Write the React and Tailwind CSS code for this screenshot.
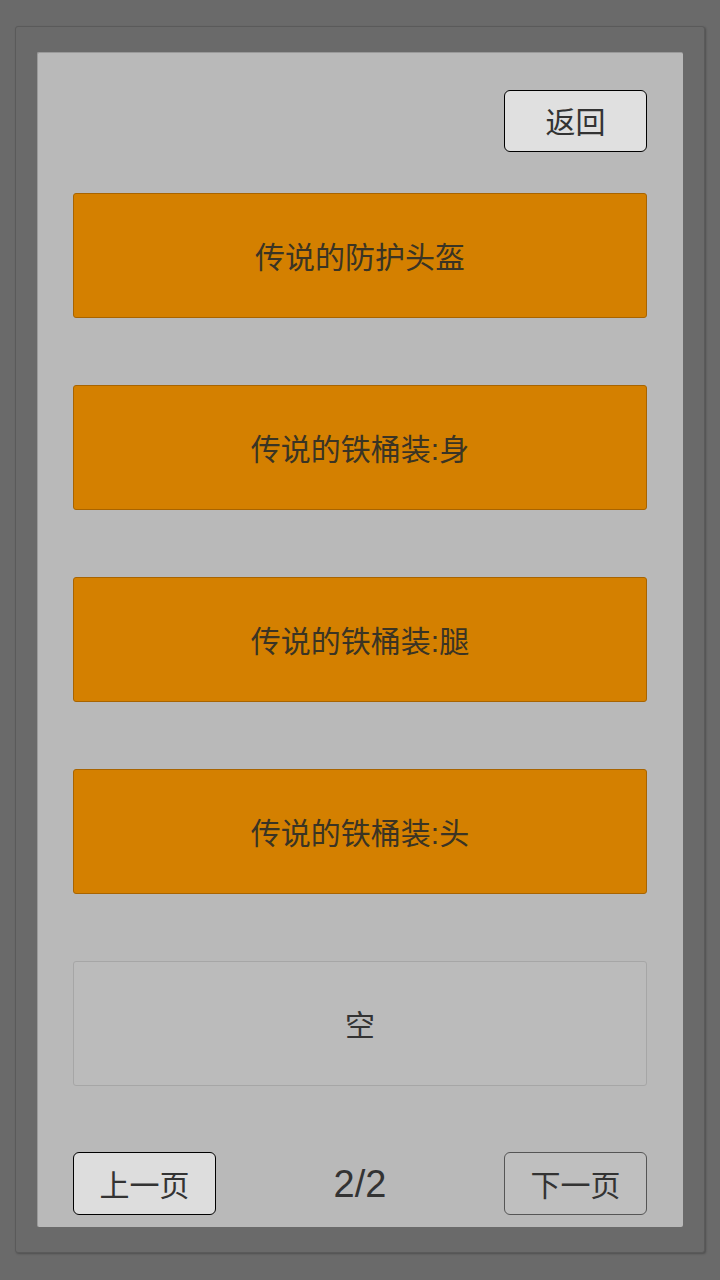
const items = ["传说的防护头盔", "传说的铁桶装:身", "传说的铁桶装:腿", "传说的铁桶装:头"];

const font = { fontFamily: '"Liberation Sans", "Noto Sans CJK SC", sans-serif' };

function ItemButton({ label }) {
  return (
    <button className="h-[125px] w-full rounded-[3px] border border-[#a86400] bg-[#d48000] pt-[3px] text-[30px] text-[#3a3424]">
      {label}
    </button>
  );
}

export default function App() {
  return (
    <div className="flex h-[1280px] w-[720px] bg-[#6a6a6a] pb-[27px] pl-[15px] pr-[15px] pt-[26px]" style={font}>
      {/* OUTER PANEL */}
      <div className="flex flex-1 rounded-[3px] border border-[#5a5a5a] bg-[#6a6a6a] px-[21px] py-[25px] shadow-[1px_1px_2px_rgba(0,0,0,0.25)]">
        {/* INNER PANEL */}
        <div className="flex flex-1 flex-col rounded-[2px] border-l border-t border-[#9a9a9a] bg-[#b9b9b9] pb-[12px] pl-[35px] pr-[36px] pt-[37px]">
          <div className="flex justify-end">
            <button className="h-[62px] w-[143px] rounded-[6px] border border-black bg-[#e0e0e0] pt-[3px] text-[30px] text-[#333]">
              返回
            </button>
          </div>

          <div className="mt-[41px] flex flex-col gap-[67px]">
            {items.map((label) => (
              <ItemButton key={label} label={label} />
            ))}
            <div className="flex h-[125px] w-full items-center justify-center rounded-[3px] border border-[#a6a6a6] bg-[#bbbbbb] pt-[3px] text-[30px] text-[#333]">
              空
            </div>
          </div>

          {/* PAGER */}
          <div className="mt-[66px] flex h-[63px] items-center justify-between">
            <button className="h-[63px] w-[143px] rounded-[6px] border border-black bg-[#dddddd] pt-[3px] text-[30px] text-[#333]">
              上一页
            </button>
            <span className="pt-[2px] text-[38px] text-[#333]">2/2</span>
            <button className="h-[63px] w-[143px] rounded-[6px] border border-[#555] bg-[#bfbfbf] pt-[3px] text-[30px] text-[#333]">
              下一页
            </button>
          </div>
        </div>
      </div>
    </div>
  );
}
